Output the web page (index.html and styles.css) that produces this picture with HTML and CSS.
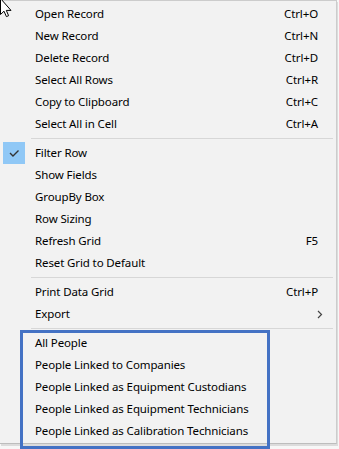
FILE: index.html
```html
<!DOCTYPE html>
<html>
<head>
<meta charset="utf-8">
<link rel="stylesheet" href="styles.css">
</head>
<body>
<div class="menu">
  <ul class="group">
    <li class="item"><span class="label">Open Record</span><span class="key">Ctrl+O</span></li>
    <li class="item"><span class="label">New Record</span><span class="key">Ctrl+N</span></li>
    <li class="item"><span class="label">Delete Record</span><span class="key">Ctrl+D</span></li>
    <li class="item"><span class="label">Select All Rows</span><span class="key">Ctrl+R</span></li>
    <li class="item"><span class="label">Copy to Clipboard</span><span class="key">Ctrl+C</span></li>
    <li class="item"><span class="label">Select All in Cell</span><span class="key">Ctrl+A</span></li>
  </ul>
  <div class="sep"></div>
  <ul class="group">
    <li class="item checked">
      <span class="check"><svg width="22" height="22" viewBox="0 0 22 22"><polyline points="7,11 10,14 15.5,8.5" fill="none" stroke="#333" stroke-width="1.4"/></svg></span>
      <span class="label">Filter Row</span><span class="key"></span>
    </li>
    <li class="item"><span class="label">Show Fields</span><span class="key"></span></li>
    <li class="item"><span class="label">GroupBy Box</span><span class="key"></span></li>
    <li class="item"><span class="label">Row Sizing</span><span class="key"></span></li>
    <li class="item"><span class="label">Refresh Grid</span><span class="key">F5</span></li>
    <li class="item"><span class="label">Reset Grid to Default</span><span class="key"></span></li>
  </ul>
  <div class="sep"></div>
  <ul class="group">
    <li class="item"><span class="label">Print Data Grid</span><span class="key">Ctrl+P</span></li>
    <li class="item"><span class="label">Export</span><span class="key"></span>
      <svg class="arrow" width="6" height="9" viewBox="0 0 6 9"><polyline points="1,1 4.5,4.5 1,8" fill="none" stroke="#444" stroke-width="1.2"/></svg>
    </li>
  </ul>
  <div class="sep"></div>
  <ul class="group callout">
    <li class="item"><span class="label">All People</span></li>
    <li class="item"><span class="label">People Linked to Companies</span></li>
    <li class="item"><span class="label">People Linked as Equipment Custodians</span></li>
    <li class="item"><span class="label">People Linked as Equipment Technicians</span></li>
    <li class="item"><span class="label">People Linked as Calibration Technicians</span></li>
  </ul>
</div>
<svg class="cursor" width="14" height="20" viewBox="0 0 14 20"><path d="M0.5 -1.5 L0.5 14.5 L4 11.2 L6.4 16.6 L8.6 15.7 L6.3 10.4 L11 10.4 Z" fill="#fff" stroke="#000" stroke-width="1" stroke-linejoin="miter"/></svg>
</body>
</html>
```

FILE: styles.css
```css
html, body {
  margin: 0;
  padding: 0;
}
body {
  width: 339px;
  height: 449px;
  background: #f7f7f7;
  position: relative;
  overflow: hidden;
  font-family: "Noto Sans", "Open Sans", sans-serif;
  font-size: 11.5px;
  letter-spacing: -0.12px;
  color: #000;
}
.menu {
  width: 336px;
  background: #f2f2f2;
  border-top: 1px solid #cccccc;
  border-right: 1px solid #cccccc;
  border-bottom: 1px solid #bdbdbd;
  padding: 2px 0 1px 0;
  box-shadow: 1px 2px 0 #dcdcdc;
}
.group {
  list-style: none;
  margin: 0;
  padding: 0;
}
.item {
  height: 22px;
  line-height: 20px;
  display: flex;
  align-items: center;
  padding: 0 18px 0 35px;
  position: relative;
  white-space: nowrap;
}
.label {
  flex: 1;
}
.key {
  text-align: right;
}
.sep {
  height: 1px;
  background: #d7d7d7;
  margin: 3px 3px 3px 31px;
}
.check {
  position: absolute;
  left: 3px;
  top: 0;
  width: 22px;
  height: 22px;
  background: #90c8f6;
}
.check svg {
  display: block;
}
.arrow {
  position: absolute;
  right: 13px;
  top: 7px;
}
.callout {
  position: relative;
}
.callout::after {
  content: "";
  position: absolute;
  left: 20px;
  top: -2px;
  width: 244px;
  height: 113px;
  border: 3px solid #4472c4;
  pointer-events: none;
}
.cursor {
  position: absolute;
  left: 0;
  top: 0;
}
```
